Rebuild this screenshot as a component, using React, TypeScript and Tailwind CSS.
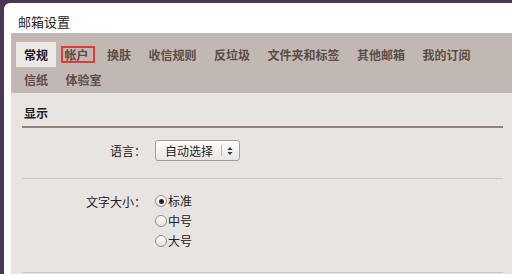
import { useState } from "react";

const row1 = ["常规", "帐户", "换肤", "收信规则", "反垃圾", "文件夹和标签", "其他邮箱", "我的订阅"];
const row2 = ["信纸", "体验室"];

function Tab({ label, active }: { label: string; active?: boolean }) {
  if (label === "帐户") {
    return (
      <div className="h-[25px] pl-[3px] pr-[3px] flex items-center">
        <span className="border-2 border-[#e0393c] pl-[2px] pr-[4px] leading-[13px] text-[#5e4c47]">{label}</span>
      </div>
    );
  }
  return (
    <div
      className={`h-[25px] px-2 flex items-center ${
        active ? "bg-[#ebe8e5] text-[#1e1a19]" : "text-[#5e4c47]"
      }`}
    >
      {label}
    </div>
  );
}

function Radio({ label, checked, onClick }: { label: string; checked: boolean; onClick: () => void }) {
  return (
    <div className="h-[20px] flex items-center gap-[1px] cursor-pointer" onClick={onClick}>
      <span className="w-[12px] h-[12px] rounded-full border border-[#8f8b88] bg-gradient-to-b from-[#ffffff] to-[#e6e3e0] flex items-center justify-center">
        {checked && <span className="w-[5px] h-[5px] rounded-full bg-[#222]" />}
      </span>
      <span className="leading-[14px]">{label}</span>
    </div>
  );
}

export default function App() {
  const [size, setSize] = useState("标准");

  return (
    <div
      className="w-[512px] h-[274px] overflow-hidden bg-[#4a3656] pt-[3px] pl-[4px] text-[12px] text-[#222]"
      style={{ fontFamily: '"Noto Sans CJK SC", "Liberation Sans", sans-serif' }}
    >
      <div className="h-full bg-white rounded-tl-[6px] flex flex-col">
        <div className="pl-[14px] pt-[12px] pb-[5px] text-[13px] leading-[13px] text-[#2a2424]">邮箱设置</div>

        <div className="ml-[7px] flex flex-col flex-1">
          <div className="bg-[#c1b8b3] pl-[5px] pt-[9px] pb-[1px] font-bold">
            <div className="flex gap-[1.5px]">
              {row1.map((t, i) => (
                <Tab key={t} label={t} active={i === 0} />
              ))}
            </div>
            <div className="flex gap-[1.5px]">
              {row2.map((t) => (
                <Tab key={t} label={t} />
              ))}
            </div>
          </div>

          <div className="flex-1 bg-[#e8e4e1] px-[11px] w-[520px]">
            <div className="w-[481px]">
              <div className="pt-[13px] pb-[6px] pl-[2px] font-bold leading-[14px] border-b-2 border-[#8e827e]">显示</div>

              <div className="pt-[12px] pb-[17px] flex items-center border-b border-[#cbc5c2]">
                <div className="w-[124px] text-right">语言：</div>
                <div className="ml-[9px] w-[85px] h-[21px] rounded-[3px] border border-[#a39d9a] bg-gradient-to-b from-[#ffffff] to-[#e9e6e3] flex items-center">
                  <span className="pl-[9px] w-[65px]">自动选择</span>
                  <span className="w-px h-[11px] bg-[#b9b4b1]" />
                  <svg width="12" height="12" viewBox="0 0 12 12" className="ml-[2px]">
                    <path d="M6 2 L8.5 5 L3.5 5 Z" fill="#333" />
                    <path d="M6 10 L8.5 7 L3.5 7 Z" fill="#333" />
                  </svg>
                </div>
              </div>

              <div className="pt-[12px] pb-[21px] flex border-b border-[#cbc5c2]">
                <div className="w-[124px] text-right h-[20px] leading-[20px] pt-[1px]">文字大小：</div>
                <div className="ml-[9px] flex flex-col">
                  {["标准", "中号", "大号"].map((s) => (
                    <Radio key={s} label={s} checked={size === s} onClick={() => setSize(s)} />
                  ))}
                </div>
              </div>
            </div>
          </div>
        </div>
      </div>
    </div>
  );
}
